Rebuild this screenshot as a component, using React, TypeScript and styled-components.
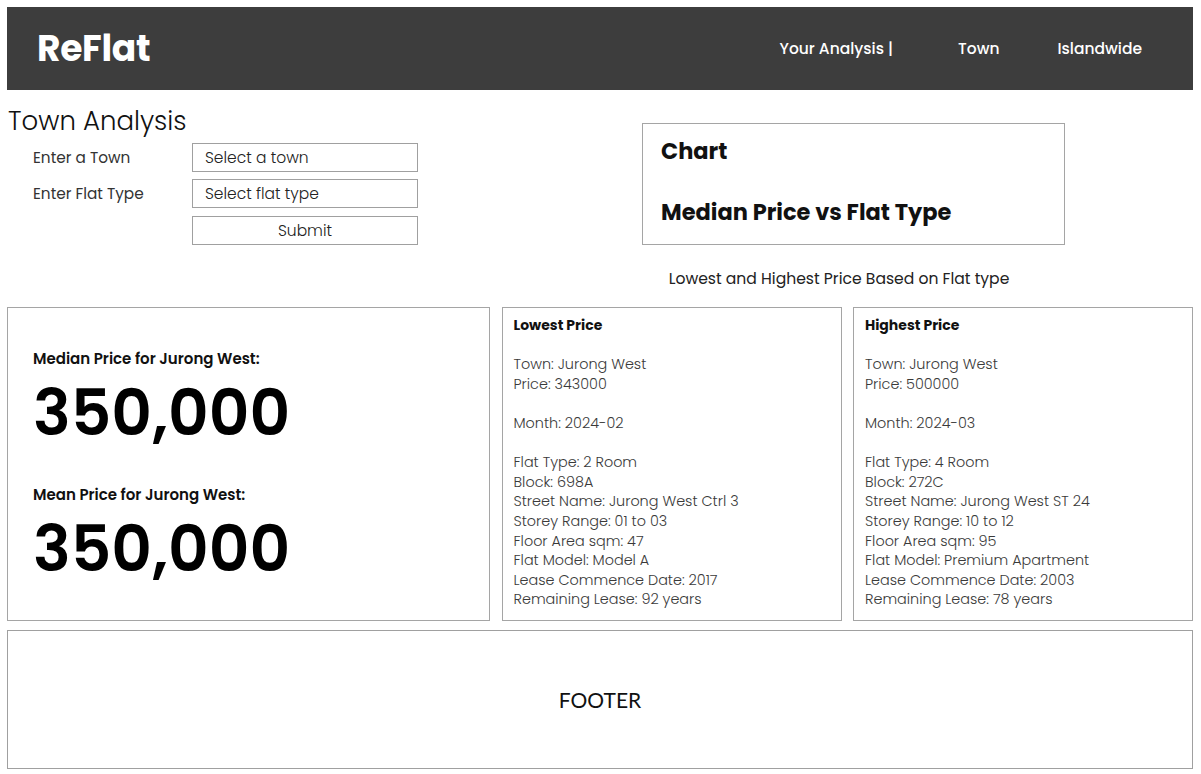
import React from "react";
import styled, { createGlobalStyle } from "styled-components";

const FONT = `"Poppins", "Inter", "Open Sans", sans-serif`;

const Global = createGlobalStyle`
  html, body { margin: 0; padding: 0; background: #ffffff; }
  body { font-family: ${FONT}; color: #111; }
  * { box-sizing: border-box; }
`;

const Page = styled.div`
  padding: 7px 8px 0 7px;
  width: 1201px;
`;

const Header = styled.header`
  height: 83px;
  background: #3d3d3d;
  display: flex;
  align-items: center;
  justify-content: space-between;
  padding: 0 51px 0 30px;
`;

const Logo = styled.div`
  color: #fff;
  font-size: 36px;
  font-weight: 700;
  letter-spacing: -0.3px;
`;

const Nav = styled.nav`
  display: flex;
  align-items: center;
`;

const NavLink = styled.a<{ $gap: number }>`
  color: #fff;
  font-size: 15.5px;
  font-weight: 500;
  text-decoration: none;
  margin-left: ${(p) => p.$gap}px;
`;

const TopRow = styled.section`
  display: flex;
  align-items: flex-start;
`;

const LeftCol = styled.div`
  width: 635px;
  padding-top: 14px;
`;

const Title = styled.h1`
  margin: 0 0 0 1px;
  font-size: 26px;
  font-weight: 300;
  line-height: 34px;
  color: #111;
`;

const Form = styled.form`
  display: grid;
  grid-template-columns: 159px 226px;
  row-gap: 7px;
  padding-left: 26px;
  margin-top: 5px;
  align-items: center;
`;

const Label = styled.label`
  font-size: 15.3px;
  font-weight: 400;
  color: #333;
`;

const Field = styled.div`
  height: 29px;
  border: 1px solid #a0a0a0;
  font-size: 15.5px;
  font-weight: 300;
  color: #222;
  display: flex;
  align-items: center;
  padding-left: 12px;
`;

const SubmitButton = styled.button`
  grid-column: 2;
  height: 29px;
  margin-top: 1px;
  border: 1px solid #a0a0a0;
  background: #fff;
  font-family: ${FONT};
  font-size: 15.5px;
  font-weight: 300;
  color: #222;
`;

const ChartBox = styled.div`
  margin-top: 33px;
  width: 423px;
  height: 122px;
  border: 1px solid #a5a5a5;
  padding: 9px 18px 14px;
  display: flex;
  flex-direction: column;
  justify-content: space-between;
`;

const ChartTitle = styled.h2`
  margin: 0;
  font-size: 22.5px;
  font-weight: 700;
  line-height: 36px;
  color: #111;
`;

const Caption = styled.p`
  margin: 24px 0 0 478px;
  text-align: center;
  font-size: 15.6px;
  font-weight: 400;
  color: #222;
  line-height: 20px;
`;

const Cards = styled.section`
  display: grid;
  grid-template-columns: 483px 340px 340px;
  column-gap: 11.5px;
  margin-top: 18px;
`;

const Card = styled.div<{ $pad: string }>`
  border: 1px solid #a5a5a5;
  height: 314px;
  padding: ${(p) => p.$pad};
`;

const StatLabel = styled.div`
  font-size: 15px;
  font-weight: 600;
  color: #111;
  line-height: 20px;
`;

const StatValue = styled.div`
  font-size: 63px;
  font-weight: 600;
  color: #000;
  line-height: 76px;
  margin: 6px 0 34px;
`;

const CardTitle = styled.div`
  font-size: 14px;
  font-weight: 700;
  line-height: 19.6px;
  color: #111;
`;

const Line = styled.div`
  font-size: 14.4px;
  font-weight: 300;
  line-height: 19.6px;
  height: 19.6px;
  color: #3a3a3a;
`;

const Footer = styled.footer`
  margin-top: 9px;
  height: 139px;
  border: 1px solid #a0a0a0;
  display: flex;
  align-items: center;
  justify-content: center;
  font-family: "Lato", "Open Sans", sans-serif;
  font-size: 21px;
  font-weight: 400;
  color: #111;
`;

type Detail = string[];

const lowest: Detail = [
  "",
  "Town: Jurong West",
  "Price: 343000",
  "",
  "Month: 2024-02",
  "",
  "Flat Type: 2 Room",
  "Block: 698A",
  "Street Name: Jurong West Ctrl 3",
  "Storey Range: 01 to 03",
  "Floor Area sqm: 47",
  "Flat Model: Model A",
  "Lease Commence Date: 2017",
  "Remaining Lease: 92 years",
];

const highest: Detail = [
  "",
  "Town: Jurong West",
  "Price: 500000",
  "",
  "Month: 2024-03",
  "",
  "Flat Type: 4 Room",
  "Block: 272C",
  "Street Name: Jurong West ST 24",
  "Storey Range: 10 to 12",
  "Floor Area sqm: 95",
  "Flat Model: Premium Apartment",
  "Lease Commence Date: 2003",
  "Remaining Lease: 78 years",
];

function DetailCard({ title, lines }: { title: string; lines: Detail }) {
  return (
    <Card $pad="8px 11px">
      <CardTitle>{title}</CardTitle>
      {lines.map((l, i) => (
        <Line key={i}>{l}</Line>
      ))}
    </Card>
  );
}

export default function App() {
  return (
    <Page>
      <Global />
      <Header>
        <Logo>ReFlat</Logo>
        <Nav>
          <NavLink href="#" $gap={0}>Your Analysis |</NavLink>
          <NavLink href="#" $gap={65}>Town</NavLink>
          <NavLink href="#" $gap={58}>Islandwide</NavLink>
        </Nav>
      </Header>
      <TopRow>
        <LeftCol>
          <Title>Town Analysis</Title>
          <Form onSubmit={(e) => e.preventDefault()}>
            <Label>Enter a Town</Label>
            <Field>Select a town</Field>
            <Label>Enter Flat Type</Label>
            <Field>Select flat type</Field>
            <SubmitButton type="submit">Submit</SubmitButton>
          </Form>
        </LeftCol>
        <ChartBox>
          <ChartTitle>Chart</ChartTitle>
          <ChartTitle>Median Price vs Flat Type</ChartTitle>
        </ChartBox>
      </TopRow>
      <Caption>Lowest and Highest Price Based on Flat type</Caption>
      <Cards>
        <Card $pad="41px 25px">
          <StatLabel>Median Price for Jurong West:</StatLabel>
          <StatValue>350,000</StatValue>
          <StatLabel>Mean Price for Jurong West:</StatLabel>
          <StatValue>350,000</StatValue>
        </Card>
        <DetailCard title="Lowest Price" lines={lowest} />
        <DetailCard title="Highest Price" lines={highest} />
      </Cards>
      <Footer>FOOTER</Footer>
    </Page>
  );
}
